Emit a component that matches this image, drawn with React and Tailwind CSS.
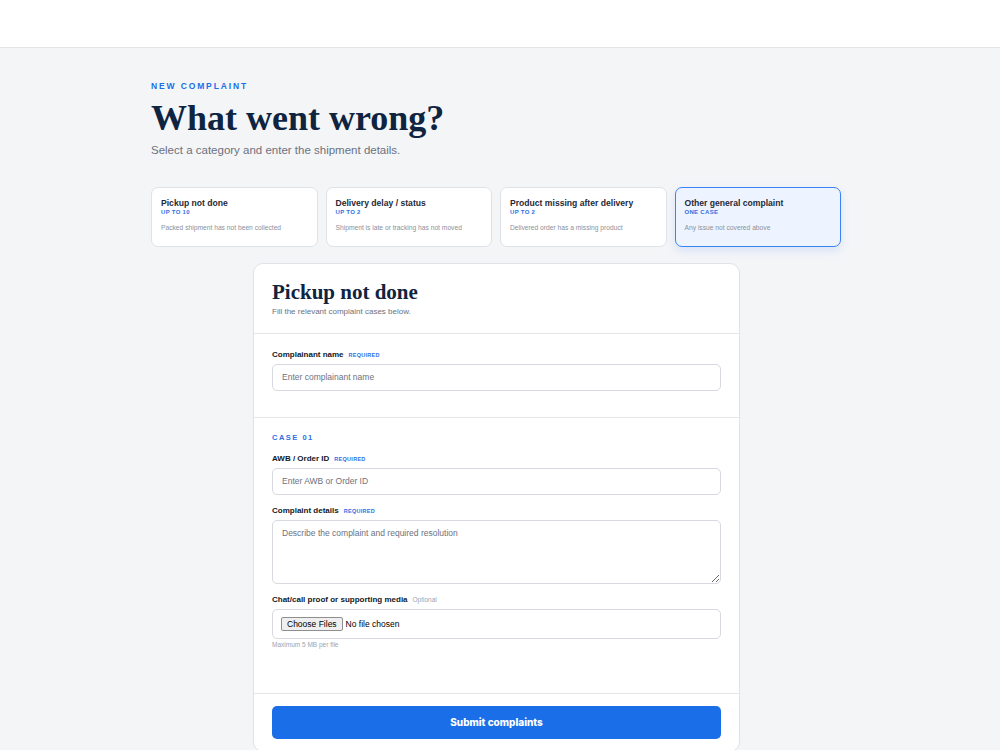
import React from "react";

const categories = [
  { title: "Pickup not done", limit: "UP TO 10", desc: "Packed shipment has not been collected" },
  { title: "Delivery delay / status", limit: "UP TO 2", desc: "Shipment is late or tracking has not moved" },
  { title: "Product missing after delivery", limit: "UP TO 2", desc: "Delivered order has a missing product" },
  { title: "Other general complaint", limit: "ONE CASE", desc: "Any issue not covered above", active: true },
];

function Label({ children, optional }) {
  return (
    <div className="flex items-center gap-[5px] mb-[4px] h-[10px]">
      <span className="text-[8px] leading-[10px] font-bold text-[#111827]">{children}</span>
      {optional ? (
        <span className="text-[6.5px] leading-[10px] text-[#9ca3af]">Optional</span>
      ) : (
        <span className="text-[5.5px] leading-[10px] font-bold tracking-[0.05em] text-[#2f6fe4]">REQUIRED</span>
      )}
    </div>
  );
}

export default function App() {
  return (
    <div className="min-h-[750px] bg-[#f4f5f7] font-['Liberation_Sans',Arial,sans-serif]">
      <div className="h-[48px] bg-white border-b border-[#e2e4e8]" />

      <div className="ml-[151px] w-[690px] pt-[32px]">
        <div className="text-[8.5px] font-bold tracking-[0.22em] text-[#1d6ee8]">NEW COMPLAINT</div>
        <h1 className="mt-[6px] text-[36px] leading-[38px] font-bold text-[#0f2440] font-['Liberation_Serif',Georgia,serif]">
          What went wrong?
        </h1>
        <p className="mt-[5px] text-[11.5px] text-[#6b7280]">Select a category and enter the shipment details.</p>

        <div className="mt-[28px] grid grid-cols-4 gap-2">
          {categories.map((c) => (
            <div
              key={c.title}
              className={
                c.active
                  ? "h-[60px] rounded-[7px] border border-[#3b82f6] bg-[#eef4ff] px-[9px] pt-[10px] shadow-[0_4px_10px_rgba(59,130,246,0.15)]"
                  : "h-[60px] rounded-[7px] border border-[#dfe2e7] bg-white px-[9px] pt-[10px]"
              }
            >
              <div className="text-[8.6px] font-bold leading-[11px] text-[#1f2937]">{c.title}</div>
              <div className="text-[6px] font-bold leading-[7px] tracking-[0.05em] text-[#2f6fe4]">{c.limit}</div>
              <div className="mt-[7px] text-[6.7px] text-[#8b919b]">{c.desc}</div>
            </div>
          ))}
        </div>
      </div>

      <div className="ml-[253px] mt-[16px] w-[487px] rounded-[10px] border border-[#dfe2e7] bg-white">
        <div className="px-[18px] pt-[16px] pb-[16px] border-b border-[#e5e7eb]">
          <h2 className="text-[21px] leading-[24px] font-bold text-[#0f2440] font-['Liberation_Serif',Georgia,serif]">
            Pickup not done
          </h2>
          <p className="mt-[3px] text-[8px] leading-[10px] text-[#6b7280]">Fill the relevant complaint cases below.</p>
        </div>

        <div className="px-[18px] pt-[16px] pb-[26px] border-b border-[#e5e7eb]">
          <Label>Complainant name</Label>
          <div className="h-[27px] rounded-[5px] border border-[#d6d9df] px-[9px] flex items-center text-[8.5px] text-[#6b7280]">
            Enter complainant name
          </div>
        </div>

        <div className="px-[18px] pt-[15px] pb-[44px] border-b border-[#e5e7eb]">
          <div className="text-[7.5px] leading-[10px] font-bold tracking-[0.2em] text-[#2f6fe4]">CASE 01</div>
          <div className="mt-[11px]">
            <Label>AWB / Order ID</Label>
            <div className="h-[27px] rounded-[5px] border border-[#d6d9df] px-[9px] flex items-center text-[8.5px] text-[#6b7280]">
              Enter AWB or Order ID
            </div>
          </div>
          <div className="mt-[11px]">
            <Label>Complaint details</Label>
            <textarea
              readOnly
              placeholder="Describe the complaint and required resolution"
              className="block w-full h-[64px] rounded-[5px] border border-[#d6d9df] px-[9px] py-[7px] text-[8.5px] leading-[11px] text-[#374151] placeholder:text-[#6b7280] outline-none resize-y"
            />
          </div>
          <div className="mt-[11px]">
            <Label optional>Chat/call proof or supporting media</Label>
            <div className="h-[30px] rounded-[5px] border border-[#d6d9df] px-[8px] flex items-center gap-[3px]">
              <span className="rounded-[2px] border border-[#8f8f8f] bg-[#efefef] px-[5px] text-[8.5px] leading-[12px] text-black">
                Choose Files
              </span>
              <span className="text-[8.5px] text-black">No file chosen</span>
            </div>
            <div className="mt-[2px] text-[6.5px] leading-[8px] text-[#9ca3af]">Maximum 5 MB per file</div>
          </div>
        </div>

        <div className="px-[18px] pt-[12px] pb-[12px]">
          <button className="w-full h-[33px] rounded-[5px] bg-[#1a6fe8] text-white text-[10px] font-extrabold font-['Inter',sans-serif]">
            Submit complaints
          </button>
        </div>
      </div>
    </div>
  );
}
